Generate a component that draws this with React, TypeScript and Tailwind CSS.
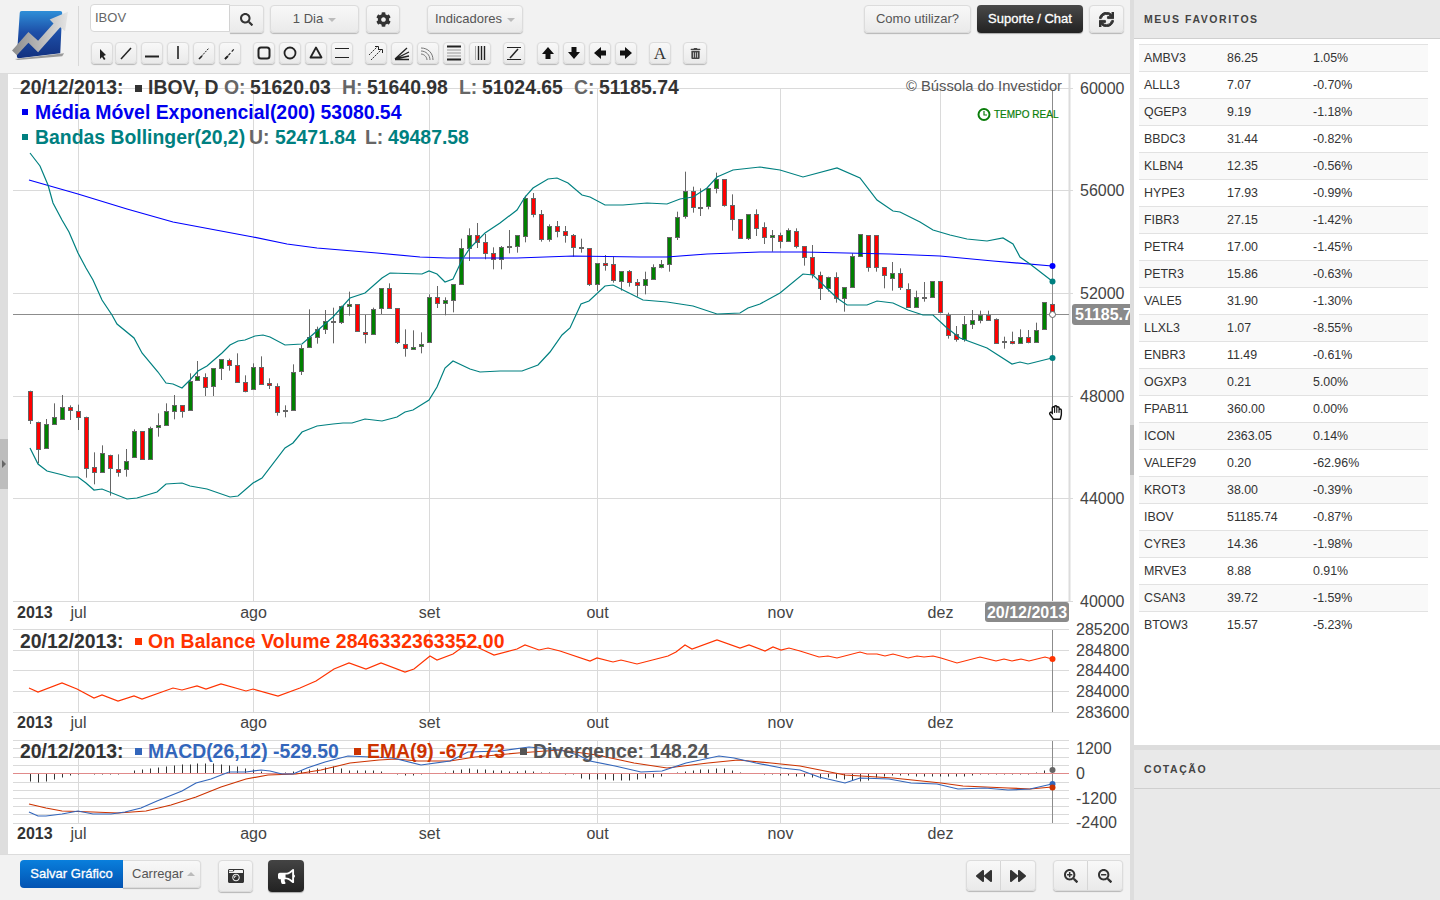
import type { ReactNode } from "react";
import {
  FaBackward,
  FaBullhorn,
  FaCameraRetro,
  FaCog,
  FaForward,
  FaRegHandPaper,
  FaSearch,
  FaSearchMinus,
  FaSearchPlus,
  FaSync,
  FaTrashAlt,
} from "react-icons/fa";

const FONT = "font-['Liberation_Sans',Arial,sans-serif]";
const BTN =
  "flex items-center justify-center rounded-[4px] border border-[#dcdcdc] bg-linear-to-b from-[#f8f8f8] to-[#eaeaea] text-[13px] text-[#555] shadow-[0_1px_1px_rgba(0,0,0,0.25)]";

const favorites = [
  ["AMBV3", "86.25", "1.05%"],
  ["ALLL3", "7.07", "-0.70%"],
  ["QGEP3", "9.19", "-1.18%"],
  ["BBDC3", "31.44", "-0.82%"],
  ["KLBN4", "12.35", "-0.56%"],
  ["HYPE3", "17.93", "-0.99%"],
  ["FIBR3", "27.15", "-1.42%"],
  ["PETR4", "17.00", "-1.45%"],
  ["PETR3", "15.86", "-0.63%"],
  ["VALE5", "31.90", "-1.30%"],
  ["LLXL3", "1.07", "-8.55%"],
  ["ENBR3", "11.49", "-0.61%"],
  ["OGXP3", "0.21", "5.00%"],
  ["FPAB11", "360.00", "0.00%"],
  ["ICON", "2363.05", "0.14%"],
  ["VALEF29", "0.20", "-62.96%"],
  ["KROT3", "38.00", "-0.39%"],
  ["IBOV", "51185.74", "-0.87%"],
  ["CYRE3", "14.36", "-1.98%"],
  ["MRVE3", "8.88", "0.91%"],
  ["CSAN3", "39.72", "-1.59%"],
  ["BTOW3", "15.57", "-5.23%"],
];

// candles: [g/r, box top, box bottom, wick top, wick bottom], read in zoomed pixels (3x)
type C = [number, number, number, number, number];
const candlesA: C[] = [
  [0,632,720,632,732],[0,725,805,725,850],[1,733,805,717,805],[1,712,733,670,733],[1,680,715,645,715],[0,682,691,676,720],[0,692,709,674,750],[0,710,862,710,893],[0,862,877,817,913],[1,820,877,796,877],
  [0,824,862,824,947],[0,866,875,823,890],[1,842,865,807,890],[1,754,832,748,832],[0,754,838,754,838],[1,745,838,740,838],[1,736,742,700,770],[1,694,736,670,736],[1,676,694,645,718],[0,676,694,676,713],
  [1,604,691,580,691],[1,587,598,543,598],[0,590,619,580,648],[1,565,619,565,648],[1,538,565,538,600],[0,541,556,536,572],[0,554,604,520,604],[0,605,632,586,637],[1,560,625,550,625],[0,562,613,529,613],
  [0,610,616,595,627],[0,617,694,610,707],[1,691,693,676,712],[1,577,691,553,691],[1,505,575,495,585],[1,472,502,388,502],[1,448,472,440,491],[1,424,448,390,462],[1,424,427,383,490],[1,377,425,377,432],
  [1,373,380,335,407],[0,373,455,373,455],[0,457,464,405,490],[1,388,464,383,464],[1,325,385,325,402],[0,325,385,310,385],[0,385,488,385,492],[0,493,505,448,530],[1,500,505,451,507],[1,493,500,457,520],
  [1,352,488,343,488],[0,352,370,318,384],
];
const candlesB: C[] = [
  [1,420,430,412,466],[1,373,421,373,457],[1,265,373,236,373],[1,226,265,205,303],[0,226,247,189,264],[0,247,280,222,298],[0,280,298,262,328],[1,262,298,258,328],[1,258,260,210,280],[1,226,259,226,278],
  [1,115,229,107,247],[0,115,163,99,172],[0,163,239,150,245],[1,199,238,193,245],[0,199,215,183,232],[0,214,227,198,248],[0,226,262,222,290],[1,262,265,236,278],[0,265,373,265,378],[1,310,373,310,393],
  [0,310,317,285,332],[0,313,361,290,368],[1,334,365,334,392],[0,334,367,330,380],[0,367,376,357,410],[1,358,376,335,403],[1,322,358,313,358],[1,313,322,300,325],[1,232,313,232,335],[1,172,232,155,240],
  [1,94,170,35,176],[0,94,142,80,158],[1,140,142,85,168],[1,85,139,85,148],[1,58,85,38,100],[0,58,136,58,140],[0,136,178,103,212],[0,178,235,178,237],[1,163,235,163,240],[0,163,205,148,228],
  [0,202,232,187,252],[1,226,233,210,275],[0,226,245,218,265],[1,211,245,205,245],[0,214,259,205,265],[0,259,292,259,317],[0,292,343,255,355],[0,344,382,335,420],[1,352,385,350,395],[0,352,415,337,428],
  [1,382,415,382,455],[1,288,382,280,382],[1,223,288,223,290],[0,226,322,226,335],[0,226,322,226,335],[0,322,347,322,385],[1,338,352,306,392],[0,338,380,325,390],[0,388,442,370,442],[1,412,442,392,442],
  [1,410,413,366,425],[1,364,412,364,412],[0,364,457,364,460],[0,465,526,458,536],[0,523,539,498,545],[1,493,539,468,545],[1,481,493,450,507],[1,465,481,452,490],[0,465,479,452,479],[0,478,550,475,550],
  [1,544,547,530,566],[0,544,551,515,553],[1,532,550,508,550],[0,532,548,510,550],[1,511,547,488,547],[1,427,508,427,508],[0,431,465,430,465],
];
const candles = [
  ...candlesA.map((c) => c.map((v, i) => (i === 0 ? v : 180 + v / 3))),
  ...candlesB.map((c) => c.map((v, i) => (i === 0 ? v : 160 + v / 3))),
];
const cx = (i: number) => Math.floor(30.33 + 7.984 * i) + 0.5;

const hist = [
  -8,-9,-8,-6,-4,-2,-1,0,-1,-1,-1,-1,0,3,4,5,6,7,8,9,9,10,10,10,9,8,7,5,4,2,0,0,1,2,3,4,5,6,7,5,3,3,3,3,2,0,-1,-2,-2,-1,0,0,1,3,4,5,4,4,3,3,2,2,3,2,1,1,
  0,-1,-1,-5,-6,-6,-6,-7,-7,-7,-6,-5,-4,-3,0,1,2,3,4,4,5,5,3,1,0,0,-1,-1,-2,-2,-3,-3,-4,-5,-4,-5,-6,-7,-8,-7,-4,-3,-2,-2,-2,-3,-3,-3,-3,-3,-3,-3,-2,-1,-1,-1,-1,-1,-1,-1,1,3,4,
];

const blue = "29,180 78,194 127,209 173,222 253,237 287,244 317,248 377,253 420,257 447,258 517,258 573,256 640,257 667,257 707,254 760,252 803,252 890,254 940,256 993,261 1052,266";
const upper = "30,153 40,166 48,185 53,203 62,220 69,232 78,253 86,268 93,280 102,300 112,315 117,324 134,338 142,353 158,372 166,383 173,384 182,388 190,380 198,371 207,366 222,353 230,345 238,341 245,340 255,336 263,335 270,337 285,345 302,344 310,337 333,317 350,298 365,293 382,278 390,273 422,274 429,271 437,274 445,282 453,279 462,260 470,248 485,233 500,223 517,210 525,197 533,188 548,179 557,178 568,183 582,195 590,197 605,205 623,205 647,203 667,204 680,199 693,197 707,188 717,177 733,170 760,167 780,170 803,177 837,168 860,178 877,200 893,211 900,212 920,222 933,230 950,235 967,239 987,241 1003,238 1013,244 1020,257 1030,264 1052,281";
const lower = "30,448 38,464 47,471 63,475 70,477 78,477 86,483 94,490 102,489 127,499 137,498 157,492 166,484 182,483 190,486 207,489 230,497 238,496 253,483 262,478 285,448 293,443 302,432 317,426 333,424 343,423 352,423 365,419 382,421 397,417 405,412 413,410 429,400 437,387 445,368 453,361 470,369 480,372 500,371 522,371 538,365 550,352 562,335 570,328 581,304 589,301 605,286 613,285 623,290 643,300 667,302 693,306 717,314 740,313 748,308 760,304 780,293 803,274 813,275 837,298 847,305 867,305 877,301 893,303 908,310 923,315 933,315 947,328 960,338 987,348 1012,364 1020,362 1028,364 1052,358";
const obv = "29,688 38,692 62,683 77,689 94,698 102,695 118,701 134,696 142,699 173,688 182,690 197,686 206,689 221,684 246,691 253,689 278,696 300,688 316,681 334,669 349,663 366,669 381,663 405,672 414,669 430,656 437,660 453,654 464,646 477,647 494,655 517,649 525,645 539,650 548,648 560,651 590,661 597,658 613,662 621,660 637,664 668,656 676,652 685,645 692,649 717,640 740,648 749,645 765,651 773,647 781,650 789,648 800,651 819,657 828,656 837,658 860,652 867,654 877,654 885,656 893,654 908,658 917,656 924,657 933,656 941,658 957,663 980,657 996,661 1004,659 1012,661 1021,659 1029,661 1045,657 1052,659";
const macd = "29,812 38,816 46,816 62,814 78,811 93,814 111,814 125,812 141,808 157,801 182,791 196,783 211,779 229,772 246,772 261,770 270,771 282,774 293,774 307,768 325,762 348,756 371,757 393,758 421,765 450,761 468,752 500,751 529,747 560,750 578,755 590,761 615,766 641,772 662,771 686,763 719,756 734,758 756,763 782,768 800,770 819,777 845,783 860,778 889,779 911,783 937,784 958,789 985,788 1008,790 1030,789 1052,784";
const ema = "29,804 46,808 62,811 93,812 118,813 146,811 171,805 196,797 221,787 246,779 268,775 296,774 321,770 350,763 379,760 396,759 418,761 450,761 475,757 518,753 560,750 597,755 634,763 667,768 708,763 738,760 771,763 800,766 845,775 893,778 941,783 963,786 1008,788 1030,789 1052,787";

const verticals = [78.5, 253.5, 429.5, 597.5, 780.5, 940.5];
const months = ["jul", "ago", "set", "out", "nov", "dez"];
const mainLevels = [
  [88.5, "60000"],
  [190.5, "56000"],
  [293.5, "52000"],
  [396.5, "48000"],
  [498.5, "44000"],
  [601.5, "40000"],
] as const;
const obvLevels = [
  [635, "285200"],
  [656, "284800"],
  [676, "284400"],
  [697, "284000"],
  [718, "283600"],
] as const;
const macdLevels = [
  [754, "1200"],
  [779, "0"],
  [804, "-1200"],
  [828, "-2400"],
] as const;
const macdLines = [740.5, 748.5, 757.5, 765.5, 782.5, 790.5, 798.5, 806.5, 814.5, 823.5];

function Logo() {
  return (
    <svg width="60" height="54" viewBox="8 8 62 56">
      <defs>
        <linearGradient id="logoBlue" x1="0" y1="0" x2="0" y2="1">
          <stop offset="0" stopColor="#2f8fd8" />
          <stop offset="0.45" stopColor="#1d4fa8" />
          <stop offset="1" stopColor="#12307f" />
        </linearGradient>
        <linearGradient id="logoGray" x1="0" y1="0" x2="1" y2="0">
          <stop offset="0" stopColor="#8c8c8c" />
          <stop offset="1" stopColor="#e4e4e4" />
        </linearGradient>
      </defs>
      <path d="M20 11 L60 11 Q62 11 62 13 L60 55 L17 60 Q15 60 15 58 L18 13 Q18 11 20 11 Z" fill="url(#logoBlue)" />
      <path d="M13 61 L64 55 L62 58 L16 62 Z" fill="#9a9a9a" />
      <path d="M10 52 L27 33 L37 42 L53 24 L49 20 L68 12 L65 32 L60 28 L37 54 L27 44 L15 57 Z" fill="url(#logoGray)" />
    </svg>
  );
}

function Tool({ children, className = "w-[22px]" }: { children: ReactNode; className?: string }) {
  return <div className={`${BTN} h-[22px] text-[#222] ${className}`}>{children}</div>;
}

function Ico({ children }: { children: ReactNode }) {
  return (
    <svg width="16" height="16" viewBox="0 0 16 16" fill="none" stroke="#222">
      {children}
    </svg>
  );
}

function Solid({ points }: { points: string }) {
  return (
    <Ico>
      <polygon points={points} fill="#111" stroke="none" />
    </Ico>
  );
}

function DrawToolbar() {
  return (
    <div className="flex gap-[12px]">
      <div className="flex gap-[4px] pl-px">
        <Tool className="w-[22px] -mr-[2px]">
          <Ico><path d="M6 4 L6 14 L8 12 L10 15 L11.5 14 L9.5 11 L12 10 Z" fill="#222" stroke="none" /></Ico>
        </Tool>
        <Tool><Ico><path d="M3 14 L13 3" strokeWidth="1.5" /></Ico></Tool>
        <Tool><Ico><path d="M1 11.5 H15" strokeWidth="2" /></Ico></Tool>
        <Tool><Ico><path d="M8 1 V14" strokeWidth="1.6" /></Ico></Tool>
        <Tool><Ico><path d="M3 14 L13 3" strokeWidth="1" strokeDasharray="2 1" /><path d="M3 14 L6 11" strokeWidth="1.6" /></Ico></Tool>
        <Tool><Ico><path d="M3 14 L13 3" strokeWidth="1.2" strokeDasharray="3 2" /><path d="M3 14 L6 11" strokeWidth="1.8" /></Ico></Tool>
      </div>
      <div className="flex gap-[4px]">
        <Tool><Ico><rect x="2.5" y="2.5" width="11" height="11" rx="2.5" strokeWidth="2" /></Ico></Tool>
        <Tool><Ico><circle cx="8" cy="8" r="5.5" strokeWidth="1.8" /></Ico></Tool>
        <Tool><Ico><path d="M8 2.5 L13.5 12.5 H2.5 Z" strokeWidth="1.8" strokeLinejoin="round" /></Ico></Tool>
        <Tool><Ico><path d="M1 3.5 H15 M1 12.5 H15" strokeWidth="1" /></Ico></Tool>
      </div>
      <div className="flex gap-[4px]">
        <Tool>
          <Ico>
            <path d="M1 10 L9 2 M3 15 L13 5" strokeWidth="0.9" strokeDasharray="2 0.8" />
            <path d="M7 1.5 H10.5 V5 M11 4.5 H14.5 V8" strokeWidth="1" />
          </Ico>
        </Tool>
        <Tool><Ico><path d="M1 14 L13 3 M1 14 L15 7 M1 14 L15 11 M1 14.5 H15" strokeWidth="1.3" /></Ico></Tool>
        <Tool>
          <Ico>
            <path d="M1 3 C8 3 13 8 13 15 M1 6 C6 6 10 10 10 15 M1 9 C4 9 7 12 7 15" stroke="#777" strokeWidth="1" />
          </Ico>
        </Tool>
        <Tool><Ico><path d="M1 1.5 H15 M1 14.5 H15" strokeWidth="2" /><path d="M1 5 H15 M1 8 H15 M1 11 H15" stroke="#999" strokeWidth="1" /></Ico></Tool>
        <Tool><Ico><path d="M6.5 1 V15 M9.5 1 V15 M12.5 1 V15" strokeWidth="1.4" /><path d="M3.5 1 V15" stroke="#aaa" strokeWidth="1" /></Ico></Tool>
      </div>
      <Tool><Ico><path d="M1 2.5 H15 M1 14.5 H15" strokeWidth="1.2" /><path d="M4 13 L12 4" strokeWidth="1.5" /></Ico></Tool>
      <div className="flex gap-[4px]">
        <Tool><Solid points="8,2 14,9 10.5,9 10.5,14 5.5,14 5.5,9 2,9" /></Tool>
        <Tool><Solid points="8,14 14,7 10.5,7 10.5,2 5.5,2 5.5,7 2,7" /></Tool>
        <Tool><Solid points="2,8 9,2 9,5.5 14,5.5 14,10.5 9,10.5 9,14" /></Tool>
        <Tool><Solid points="14,8 7,2 7,5.5 2,5.5 2,10.5 7,10.5 7,14" /></Tool>
      </div>
      <Tool><span className="font-['Liberation_Serif',serif] text-[17px] leading-none text-[#333]">A</span></Tool>
      <Tool className="w-[24px]"><FaTrashAlt size={11} className="text-[#444]" /></Tool>
    </div>
  );
}

function TopBar() {
  return (
    <div className="flex h-[74px] border-b border-[#dcdcdc] bg-[#f2f2f2]">
      <div className="mt-[6px] h-[60px] w-[79px] border-r border-[#d8d8d8] pl-[10px] pt-[2px]">
        <Logo />
      </div>
      <div className="ml-[11px] flex flex-1 flex-col gap-[9px] pr-[6px] pt-[4px]">
        <div className="flex h-[29px] items-start">
          <div className="flex h-[28px] w-[140px] items-start rounded-l-[4px] border border-[#d8d8d8] bg-white pl-[4px] pt-[5px] text-[13px] leading-[16px] text-[#666]">
            IBOV
          </div>
          <div className={`${BTN} mt-px h-[28px] w-[34px] rounded-l-none border-l-0 !text-[#333]`}>
            <FaSearch size={13} />
          </div>
          <div className={`${BTN} ml-[6px] mt-px h-[28px] w-[89px] gap-[5px]`}>
            1 Dia
            <span className="mt-[2px] border-x-[4px] border-t-[4px] border-x-transparent border-t-[#bbb]" />
          </div>
          <div className={`${BTN} ml-[7px] mt-px h-[28px] w-[34px] !text-[#333]`}>
            <FaCog size={15} />
          </div>
          <div className={`${BTN} ml-[27px] mt-px h-[28px] w-[96px] gap-[5px]`}>
            Indicadores
            <span className="mt-[2px] border-x-[4px] border-t-[4px] border-x-transparent border-t-[#bbb]" />
          </div>
          <div className={`${BTN} ml-auto mt-px h-[28px] w-[107px]`}>Como utilizar?</div>
          <div className="ml-[6px] mt-px flex h-[28px] w-[106px] items-center justify-center rounded-[4px] bg-linear-to-b from-[#4a4a4a] to-[#222] text-[13px] text-white shadow-[0_1px_1px_rgba(0,0,0,0.3)] [-webkit-text-stroke:0.3px_white]">
            Suporte / Chat
          </div>
          <div className={`${BTN} ml-[6px] mt-px h-[28px] w-[35px] !text-[#333]`}>
            <FaSync size={15} className="stroke-current [stroke-width:30px]" />
          </div>
        </div>
        <DrawToolbar />
      </div>
    </div>
  );
}

function Legend() {
  return (
    <g fontWeight="700" fontSize="19.4">
      <text x="20" y="94" fill="#333">20/12/2013:</text>
      <rect x="135" y="85" width="7" height="7" fill="#333" />
      <text x="148" y="94" fill="#333">IBOV, D</text>
      <text x="224" y="94" fill="#666">O:</text>
      <text x="250" y="94" fill="#333">51620.03</text>
      <text x="342" y="94" fill="#666">H:</text>
      <text x="367" y="94" fill="#333">51640.98</text>
      <text x="459" y="94" fill="#666">L:</text>
      <text x="482" y="94" fill="#333">51024.65</text>
      <text x="574" y="94" fill="#666">C:</text>
      <text x="599" y="94" fill="#333">51185.74</text>

      <rect x="22" y="109" width="6" height="6" fill="#0000ee" />
      <text x="35" y="119" fill="#0000ee">Média Móvel Exponencial(200) 53080.54</text>

      <rect x="22" y="134" width="6" height="6" fill="#008080" />
      <text x="35" y="144" fill="#008080">Bandas Bollinger(20,2)</text>
      <text x="249" y="144" fill="#666">U:</text>
      <text x="275" y="144" fill="#008080">52471.84</text>
      <text x="365" y="144" fill="#666">L:</text>
      <text x="388" y="144" fill="#008080">49487.58</text>

      <text x="20" y="648" fill="#333">20/12/2013:</text>
      <rect x="135" y="638" width="7" height="7" fill="#ff3300" />
      <text x="148" y="648" fill="#ff3300" letterSpacing="0.1">On Balance Volume 2846332363352.00</text>

      <text x="20" y="758" fill="#333">20/12/2013:</text>
      <rect x="135" y="748" width="7" height="7" fill="#3366bb" />
      <text x="148" y="758" fill="#3366bb">MACD(26,12) -529.50</text>
      <rect x="354" y="748" width="7" height="7" fill="#cc3300" />
      <text x="367" y="758" fill="#cc3300">EMA(9) -677.73</text>
      <rect x="520" y="748" width="7" height="7" fill="#555" />
      <text x="533" y="758" fill="#555">Divergence: 148.24</text>
    </g>
  );
}

function XAxis({ y }: { y: number }) {
  return (
    <g fontSize="16" fill="#444">
      <text x="17" y={y} fontWeight="700" fill="#333">2013</text>
      {months.map((m, i) => (
        <text key={m} x={verticals[i]} y={y} textAnchor="middle">{m}</text>
      ))}
    </g>
  );
}

function Chart() {
  return (
    <svg width="1122" height="780" viewBox="8 74 1122 780" className="bg-white">
      {/* price panel grid */}
      <g stroke="#dadada" strokeWidth="1" fill="none">
        {mainLevels.map(([y]) => (
          <path key={y} d={`M13 ${y} H1073`} />
        ))}
        {verticals.map((x) => (
          <path key={x} d={`M${x} 88 V601 M${x} 630 V712 M${x} 741 V823`} />
        ))}
        <path d="M13 629.5 H1069 M13 650.5 H1069 M13 670.5 H1069 M13 691.5 H1069 M13 712.5 H1069" />
        {macdLines.map((y) => (
          <path key={y} d={`M13 ${y} H1069`} />
        ))}
        <path d="M1069.5 74 V601" stroke="#dcdcdc" strokeWidth="2" />
      </g>

      <g stroke="#8c8c8c" fill="none">
        <path d="M13 314.5 H1069" />
        <path d="M1052.5 90 V601 M1052.5 630 V712 M1052.5 741 V823" />
      </g>

      {/* candles */}
      {candles.map((c, i) => {
        const x = cx(i);
        return (
          <g key={i}>
            <path d={`M${x} ${c[3]} V${c[4]}`} stroke="#666" />
            <rect
              x={x - 2}
              y={Math.round(c[1]) + 0.5}
              width="4"
              height={Math.max(1, Math.round(c[2] - c[1]))}
              fill={c[0] ? "#008000" : "#ff0000"}
              stroke="#666"
            />
          </g>
        );
      })}

      <polyline points={blue} fill="none" stroke="#0000ff" strokeWidth="1.2" />
      <polyline points={upper} fill="none" stroke="#008080" strokeWidth="1.2" />
      <polyline points={lower} fill="none" stroke="#008080" strokeWidth="1.2" />
      <polyline points={obv} fill="none" stroke="#ff3300" strokeWidth="1.2" />

      {/* macd histogram */}
      {hist.map((h, i) => (
        <path key={i} d={`M${cx(i)} 773.5 V${773.5 - h}`} stroke="#333" />
      ))}
      <path d="M13 773.5 H1069" stroke="#e08a8a" />
      <polyline points={ema} fill="none" stroke="#cc3300" strokeWidth="1.2" />
      <polyline points={macd} fill="none" stroke="#3366bb" strokeWidth="1.2" />

      {/* last value markers */}
      <circle cx="1052.5" cy="266" r="3" fill="#0000ff" />
      <circle cx="1052.5" cy="281.5" r="3" fill="#008080" />
      <circle cx="1052.5" cy="358" r="3" fill="#008080" />
      <circle cx="1052.5" cy="314.5" r="3" fill="#fff" stroke="#666" />
      <circle cx="1052.5" cy="659" r="3" fill="#ff3300" />
      <circle cx="1052.5" cy="770" r="3" fill="#666" />
      <circle cx="1052.5" cy="784" r="3" fill="#3366bb" />
      <circle cx="1052.5" cy="787.5" r="3" fill="#cc3300" />

      <Legend />

      <text x="906" y="91" fontSize="14.75" fill="#555">© Bússola do Investidor</text>
      <g fill="none" stroke="#0a7d0a">
        <circle cx="984" cy="114.5" r="5.5" strokeWidth="2" />
        <path d="M984 111 V115 H987" strokeWidth="1.2" />
      </g>
      <text x="994" y="118" fontSize="10" fill="#0a7d0a" stroke="#0a7d0a" strokeWidth="0.2">TEMPO REAL</text>

      {/* axes */}
      <g fontSize="16" fill="#444">
        {mainLevels.map(([y, t]) => (
          <text key={t} x="1080" y={y + 5.5}>{t}</text>
        ))}
        {obvLevels.map(([y, t]) => (
          <text key={t} x="1076" y={y}>{t}</text>
        ))}
        {macdLevels.map(([y, t]) => (
          <text key={t} x="1076" y={y}>{t}</text>
        ))}
      </g>
      <XAxis y={618} />
      <XAxis y={728} />
      <XAxis y={839} />

      <rect x="985" y="602" width="84" height="20" rx="3" fill="#8a8a8a" />
      <text x="1027" y="618" fontSize="16" fontWeight="700" fill="#fff" textAnchor="middle">20/12/2013</text>
      <rect x="1072" y="304" width="70" height="21" rx="3" fill="#8a8a8a" />
      <text x="1075" y="320" fontSize="16" fontWeight="700" fill="#fff">51185.74</text>

      <ellipse cx="1055.5" cy="414" rx="5" ry="6" fill="#fff" />
      <FaRegHandPaper x="1048" y="405" size={15} color="#111" />
    </svg>
  );
}

function BottomBar() {
  return (
    <div className="flex flex-1 items-start border-t border-[#dcdcdc] bg-[#f2f2f2] pl-[20px] pr-[7px] pt-[5px]">
      <div className="flex h-[28px] w-[103px] items-center justify-center rounded-l-[4px] bg-linear-to-b from-[#0a7fdc] to-[#0453b2] text-[13px] text-white [-webkit-text-stroke:0.3px_white]">
        Salvar Gráfico
      </div>
      <div className={`${BTN} h-[28px] w-[78px] !justify-start gap-[4px] rounded-l-none border-l-0 pl-[9px]`}>
        Carregar
        <span className="border-x-[4px] border-b-[4px] border-x-transparent border-b-[#bbb]" />
      </div>
      <div className={`${BTN} ml-[17px] h-[32px] w-[35px] !text-[#333]`}>
        <FaCameraRetro size={16} />
      </div>
      <div className="ml-[15px] flex h-[32px] w-[36px] items-center justify-center rounded-[4px] bg-linear-to-b from-[#444] to-[#222] text-white shadow-[0_1px_1px_rgba(0,0,0,0.3)]">
        <FaBullhorn size={17} />
      </div>
      <div className="ml-auto flex h-[31px]">
        <div className={`${BTN} w-[35px] rounded-r-none !text-[#333]`}><FaBackward size={16} /></div>
        <div className={`${BTN} w-[35px] rounded-l-none border-l-0 !text-[#333]`}><FaForward size={16} /></div>
      </div>
      <div className="ml-[17px] flex h-[31px]">
        <div className={`${BTN} w-[35px] rounded-r-none !text-[#333]`}><FaSearchPlus size={14} /></div>
        <div className={`${BTN} w-[35px] rounded-l-none border-l-0 !text-[#333]`}><FaSearchMinus size={14} /></div>
      </div>
    </div>
  );
}

function SectionHeader({ title }: { title: string }) {
  return (
    <div className="flex h-[39px] shrink-0 items-center border-b border-[#cfcfcf] bg-[#e9e9e9] pl-[10px] pt-[2px] text-[10.5px] font-bold tracking-[1.55px] text-[#444]">
      {title}
    </div>
  );
}

function Favorites() {
  return (
    <div className="h-[706px] shrink-0 bg-white pl-[5px] pr-[12px] pt-[5px]">
      {favorites.map(([name, price, change], i) => (
        <div
          key={name}
          className={`flex h-[27px] items-center border-t border-[#e2e2e2] pl-[5px] text-[12.4px] text-[#333] ${i % 2 === 0 ? "bg-[#f9f9f9]" : ""}`}
        >
          <span className="w-[83px]">{name}</span>
          <span className="w-[86px]">{price}</span>
          <span>{change}</span>
        </div>
      ))}
    </div>
  );
}

export default function App() {
  return (
    <div className={`flex h-[900px] w-[1440px] overflow-hidden bg-[#f2f2f2] ${FONT}`}>
      <div className="flex w-[1130px] flex-col">
        <TopBar />
        <div className="flex h-[780px]">
          <div className="flex w-[8px] items-center bg-[#dedede]">
            <div className="flex h-[50px] w-[8px] items-center justify-center bg-[#bdbdbd]">
              <span className="border-y-[4px] border-l-[4px] border-y-transparent border-l-[#666]" />
            </div>
          </div>
          <Chart />
        </div>
        <BottomBar />
      </div>
      <div className="flex w-[4px] items-center bg-[#dddddd]">
        <div className="h-[50px] w-[4px] bg-[#bdbdbd]" />
      </div>
      <div className="flex flex-1 flex-col bg-[#e9e9e9]">
        <SectionHeader title="MEUS FAVORITOS" />
        <Favorites />
        <div className="h-[5px] shrink-0 bg-[#dddddd]" />
        <SectionHeader title="COTAÇÃO" />
      </div>
    </div>
  );
}
